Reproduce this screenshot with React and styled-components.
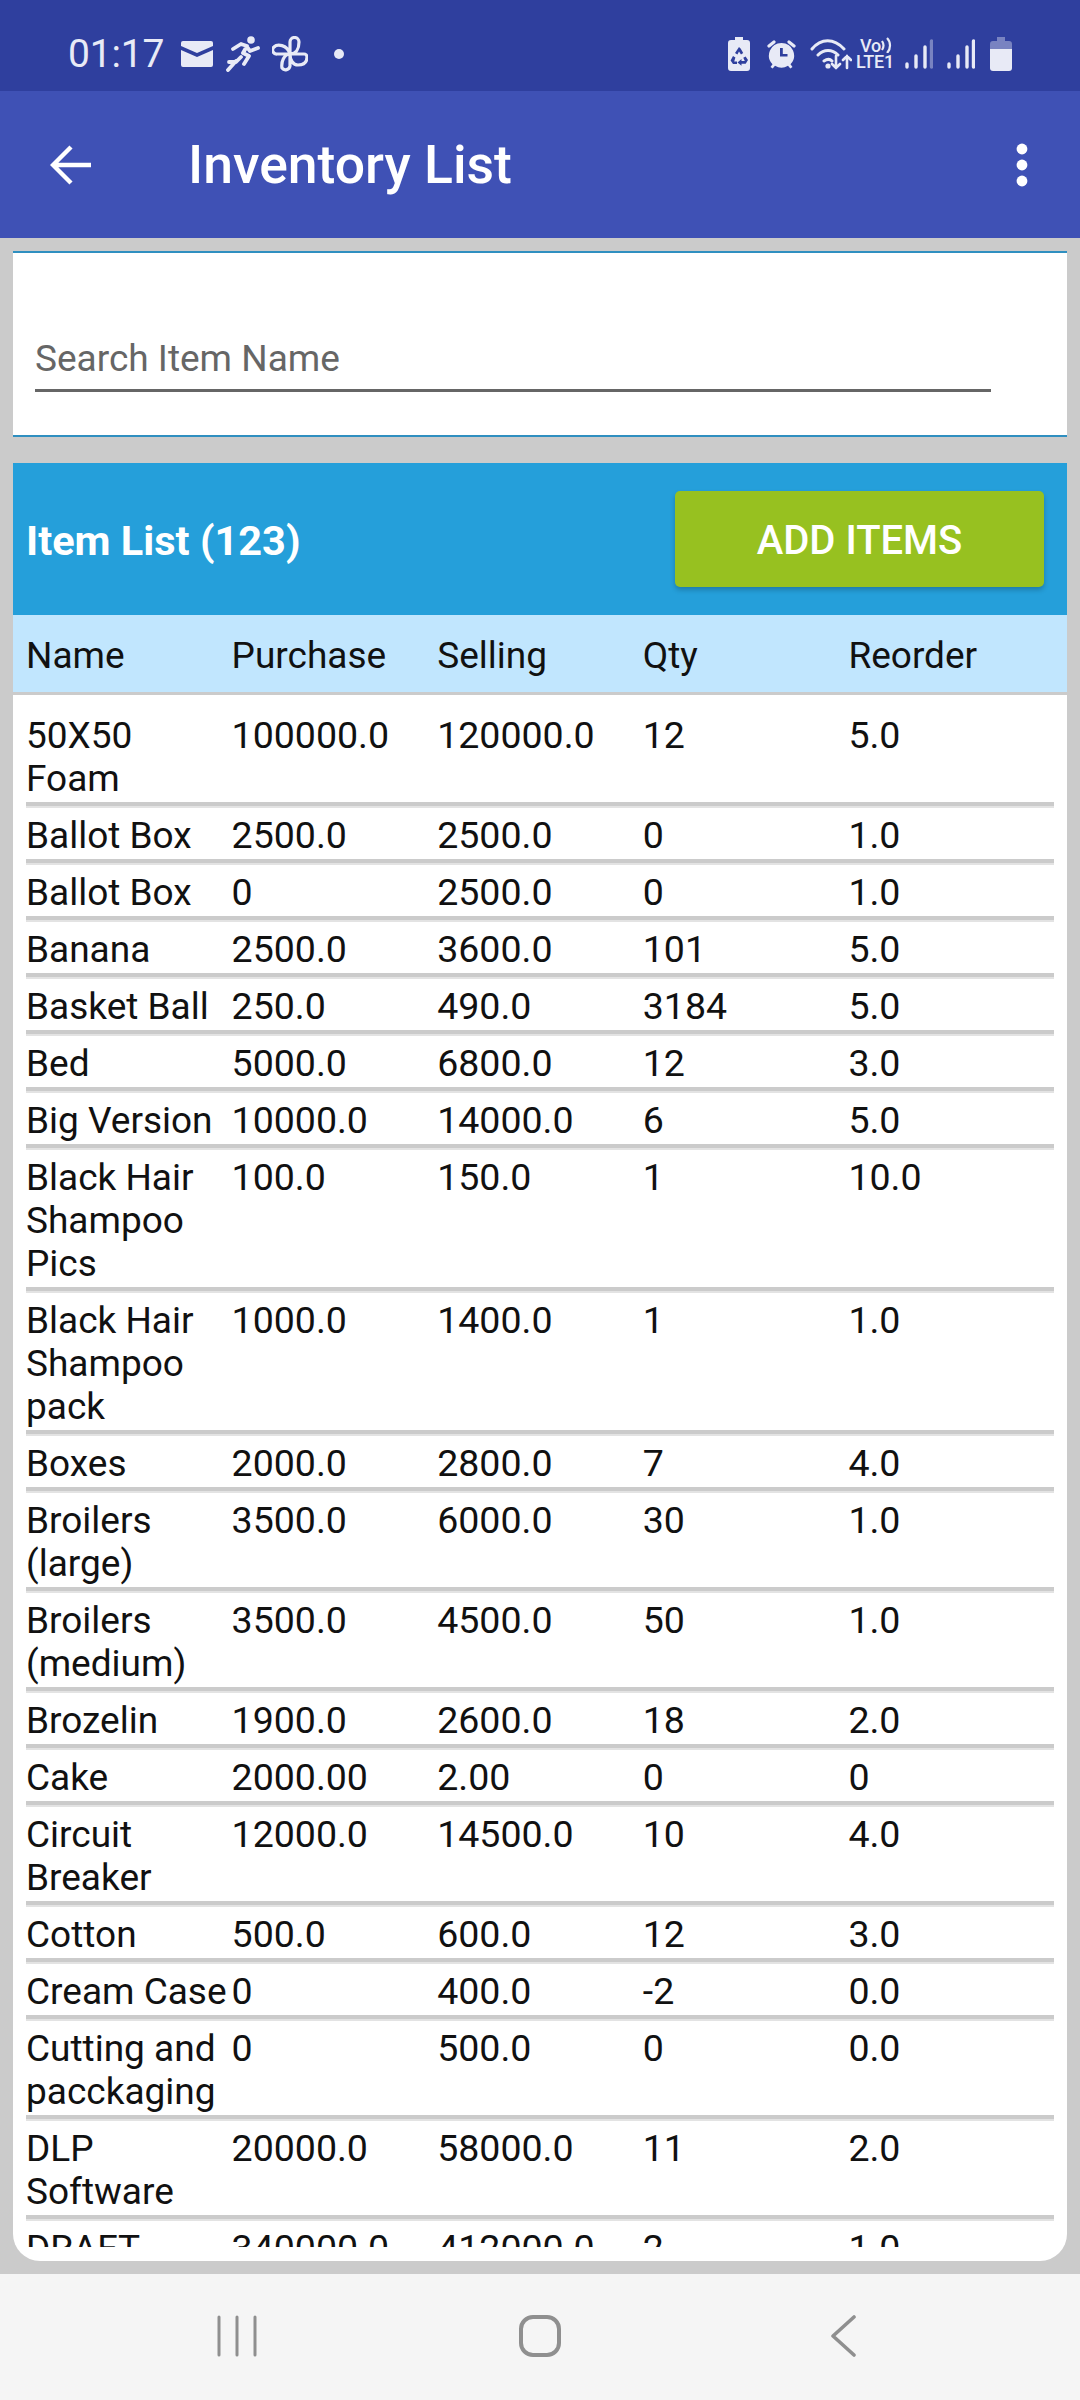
import React from 'react'
import styled, { createGlobalStyle } from 'styled-components'

const Global = createGlobalStyle`
  html, body { margin: 0; padding: 0; background: #cbcbcb; }
  * { box-sizing: border-box; }
  body { font-family: Roboto, "Noto Sans", sans-serif; }
`

const Page = styled.div`
  width: 1080px;
  height: 2400px;
  display: flex;
  flex-direction: column;
  overflow: hidden;
`

const StatusBar = styled.div`
  height: 91px;
  flex: none;
  background: #2f3f9e;
  color: #e8eaf6;
  display: flex;
  align-items: center;
  justify-content: space-between;
  padding: 17px 68px 0 68px;
`

const StatusGroup = styled.div`
  display: flex;
  align-items: center;
`

const Clock = styled.span`
  font-size: 39px;
  font-weight: 400;
  letter-spacing: -0.2px;
  margin-right: 17px;
`

const StatusIcon = styled.svg`
  display: block;
  flex: none;
  margin-left: ${(props) => props.$gap || 0}px;
`

const Network = styled.div`
  position: relative;
  width: 40px;
  height: 32px;
  margin-left: 4px;
  margin-right: 9px;
  font-size: 18px;
  font-weight: 500;
  line-height: 16px;
  letter-spacing: -0.2px;
  text-indent: 4px;
`

const VoWaves = styled.svg`
  position: absolute;
  left: 25px;
  top: -1px;
`

const Toolbar = styled.header`
  height: 147px;
  flex: none;
  background: #3f51b5;
  color: #fff;
  display: flex;
  align-items: center;
  padding: 0 52px 0 50px;
`

const BackArrow = styled.svg`
  flex: none;
`

const Title = styled.h1`
  margin: 0 0 0 97px;
  flex: 1;
  font-size: 53.5px;
  font-weight: 500;
  line-height: 62px;
`

const Content = styled.main`
  flex: 1;
  min-height: 0;
  background: #cbcbcb;
  padding: 13px;
  display: flex;
  flex-direction: column;
  gap: 26px;
`

const SearchCard = styled.section`
  height: 186px;
  flex: none;
  background: #fff;
  border-top: 2px solid #2f8fc0;
  border-bottom: 2px solid #2f8fc0;
  padding: 80px 76px 0 22px;
`

const SearchField = styled.div`
  height: 59px;
  border-bottom: 3px solid #666;
  color: #666;
  font-size: 37px;
  line-height: 43px;
  padding-top: 4px;
`

const ListCard = styled.section`
  flex: 1;
  min-height: 0;
  background: #fff;
  border-radius: 0 0 27px 27px;
  padding-bottom: 14px;
  display: flex;
  flex-direction: column;
`

const ListHeader = styled.div`
  height: 152px;
  flex: none;
  background: #259fda;
  display: flex;
  align-items: center;
  justify-content: space-between;
  padding: 0 23px 0 13px;
`

const ListTitle = styled.h2`
  margin: 0;
  color: #fff;
  font-size: 41.5px;
  font-weight: 700;
  padding-top: 2px;
`

const AddButton = styled.button`
  width: 369px;
  height: 96px;
  border: 0;
  border-radius: 5px;
  padding: 2px 0 0;
  background: #97c120;
  color: #fff;
  font-family: inherit;
  font-size: 40px;
  font-weight: 500;
  box-shadow: 0 3px 5px rgba(0, 0, 0, 0.22);
`

const Columns = styled.div`
  display: grid;
  grid-template-columns: repeat(5, minmax(0, 1fr));
  font-size: 37.5px;
  line-height: 43px;
  color: #111;
`

const HeadRow = styled(Columns)`
  height: 80px;
  flex: none;
  align-items: center;
  padding: 4px 13px 0;
  font-size: 37px;
  background: #c1e6fe;
  border-bottom: 3px solid #cbcbcb;
`

const Rows = styled.div`
  flex: 1;
  min-height: 0;
  overflow: hidden;
  padding: 13px 13px 0;
`

const Row = styled(Columns)`
  padding: 6px 0 2px;
  border-bottom: 4px solid #cbcbcb;
  margin-bottom: 2px;
  box-shadow: 0 2px 0 #e3e3e3;
`

const NameCell = styled.span`
  font-size: 37px;
`

const NavBar = styled.nav`
  height: 126px;
  flex: none;
  background: #f5f5f5;
  display: grid;
  grid-template-columns: repeat(3, 1fr);
  padding: 0 86px;
  align-items: center;
  justify-items: center;
`

const NavIcon = styled.svg`
  display: block;
  margin-top: -2px;
`

const items = [
  ['50X50 Foam', '100000.0', '120000.0', '12', '5.0'],
  ['Ballot Box', '2500.0', '2500.0', '0', '1.0'],
  ['Ballot Box', '0', '2500.0', '0', '1.0'],
  ['Banana', '2500.0', '3600.0', '101', '5.0'],
  ['Basket Ball', '250.0', '490.0', '3184', '5.0'],
  ['Bed', '5000.0', '6800.0', '12', '3.0'],
  ['Big Version', '10000.0', '14000.0', '6', '5.0'],
  ['Black Hair Shampoo Pics', '100.0', '150.0', '1', '10.0'],
  ['Black Hair Shampoo pack', '1000.0', '1400.0', '1', '1.0'],
  ['Boxes', '2000.0', '2800.0', '7', '4.0'],
  ['Broilers (large)', '3500.0', '6000.0', '30', '1.0'],
  ['Broilers (medium)', '3500.0', '4500.0', '50', '1.0'],
  ['Brozelin', '1900.0', '2600.0', '18', '2.0'],
  ['Cake', '2000.00', '2.00', '0', '0'],
  ['Circuit Breaker', '12000.0', '14500.0', '10', '4.0'],
  ['Cotton', '500.0', '600.0', '12', '3.0'],
  ['Cream Case', '0', '400.0', '-2', '0.0'],
  ['Cutting and pacckaging', '0', '500.0', '0', '0.0'],
  ['DLP Software', '20000.0', '58000.0', '11', '2.0'],
  ['DRAFT', '340000.0', '412000.0', '2', '1.0'],
]

function Signal({ gap, faded }) {
  return (
    <StatusIcon $gap={gap} width="28" height="30" viewBox="0 0 28 30">
      <g fill="none" stroke="currentColor" strokeWidth="3.4" strokeLinecap="round">
        <path d="M2 25v3M11 17v11M20 8v20" />
        <path d="M26.500 2v26" opacity={faded ? 0.4 : 1} />
      </g>
    </StatusIcon>
  )
}

function App() {
  return (
    <Page>
      <Global />
      <StatusBar>
        <StatusGroup>
          <Clock>01:17</Clock>
          <StatusIcon width="32" height="26" viewBox="0 0 32 26">
            <path fill="currentColor" d="M2 0h28a2 2 0 0 1 2 2v3L16 12 0 5V2a2 2 0 0 1 2-2z" />
            <path fill="currentColor" d="M0 9l16 7 16-7v15a2 2 0 0 1-2 2H2a2 2 0 0 1-2-2z" />
          </StatusIcon>
          <StatusIcon $gap={13} width="34" height="36" viewBox="0 0 34 36">
            <circle cx="25" cy="4" r="3.800" fill="currentColor" />
            <path fill="none" stroke="currentColor" strokeWidth="3.800" strokeLinecap="round" strokeLinejoin="round"
              d="M7 13l8-5 6 2-4 7 6 3-5 8M21 11l3 4 8-3M15 21l-5 5-7 0M2 34l8-9" />
          </StatusIcon>
          <StatusIcon $gap={12} width="36" height="36" viewBox="0 0 36 36">
            <path fill="none" stroke="currentColor" strokeWidth="3.200" strokeLinejoin="round"
              d="M18 18V6a4.500 4.500 0 0 1 9 0c0 7-3 12-9 12zM18 18h14a3 3 0 0 1 3 3c0 6-4 8-9 8-5 0-8-5-8-11zM18 18v12a4.500 4.500 0 0 1-8 2c-1-6 2-14 8-14zM18 18H5a4 4 0 0 1-3-7c3-3 13-3 16 7z" />
          </StatusIcon>
          <StatusIcon $gap={25} width="12" height="12" viewBox="0 0 12 12">
            <circle cx="6" cy="6" r="5" fill="currentColor" />
          </StatusIcon>
        </StatusGroup>
        <StatusGroup>
          <StatusIcon width="22" height="34" viewBox="0 0 22 34">
            <path fill="currentColor" fillRule="evenodd"
              d="M7 0h8v3h4a3 3 0 0 1 3 3v25a3 3 0 0 1-3 3H3a3 3 0 0 1-3-3V6a3 3 0 0 1 3-3h4zM11 10l-4 6 2.400 1.400 1.600-3 2 3 2.200-1.300-2.400-4.300zM5 19l-2.400 4.500L5 27h4v-2.600H6.200l1.200-3.800zM17.600 19.500l-2.300 1.300 1.500 3.200H13.500v-2l-4 3.400 4 3.400v-2h4.200l2.300-3.700z" />
          </StatusIcon>
          <StatusIcon $gap={17} width="29" height="30" viewBox="0 0 29 30">
            <path fill="currentColor" fillRule="evenodd"
              d="M14.500 4a12.500 12.500 0 0 1 9 21.200l2 2.800-2.200 1.500-2.300-2.800a12.500 12.500 0 0 1-13 0L5.700 29.500 3.500 28l2-2.800A12.500 12.500 0 0 1 14.500 4zM13 9v8.500h7.500v-2.600H15.800V9z" />
            <path fill="none" stroke="currentColor" strokeWidth="3.200" strokeLinecap="round" d="M2 7l5-4M27 7l-5-4" />
          </StatusIcon>
          <StatusIcon $gap={14} width="42" height="32" viewBox="0 0 42 32">
            <g fill="none" stroke="currentColor" strokeWidth="3" strokeLinecap="round">
              <path d="M2 11C11 0 24 0 34 11M8 17c6-6 14-6 20 0M14 23c3-2 6-2 8 0" />
              <path d="M26 18v12M22 26l4 4 4-4M37 30V18M33 22l4-4 4 4" strokeWidth="2.600" />
            </g>
            <circle cx="18" cy="28" r="2.600" fill="currentColor" />
          </StatusIcon>
          <Network>
            Vo
            <br />
            LTE1
            <VoWaves width="12" height="16" viewBox="0 0 12 16">
              <path fill="none" stroke="currentColor" strokeWidth="2.200" d="M1 4c2 3 2 6 0 9M6 1c4 4 4 11 0 15" />
            </VoWaves>
          </Network>
          <Signal faded />
          <Signal gap={14} />
          <StatusIcon $gap={15} width="22" height="34" viewBox="0 0 22 34">
            <path fill="currentColor" opacity="0.4" d="M7 0h8v4h4a3 3 0 0 1 3 3v5H0V7a3 3 0 0 1 3-3h4z" />
            <path fill="currentColor" d="M0 12h22v19a3 3 0 0 1-3 3H3a3 3 0 0 1-3-3z" />
          </StatusIcon>
        </StatusGroup>
      </StatusBar>

      <Toolbar>
        <BackArrow width="41" height="40" viewBox="0 0 41 40">
          <path fill="none" stroke="#fff" strokeWidth="4.400" d="M41 20H3M21 2L3 20l18 18" />
        </BackArrow>
        <Title>Inventory List</Title>
        <svg width="12" height="44" viewBox="0 0 12 44">
          <g fill="#fff">
            <circle cx="6" cy="6" r="5.400" />
            <circle cx="6" cy="22" r="5.400" />
            <circle cx="6" cy="38" r="5.400" />
          </g>
        </svg>
      </Toolbar>

      <Content>
        <SearchCard>
          <SearchField>Search Item Name</SearchField>
        </SearchCard>
        <ListCard>
          <ListHeader>
            <ListTitle>Item List (123)</ListTitle>
            <AddButton>ADD ITEMS</AddButton>
          </ListHeader>
          <HeadRow>
            <span>Name</span>
            <span>Purchase</span>
            <span>Selling</span>
            <span>Qty</span>
            <span>Reorder</span>
          </HeadRow>
          <Rows>
            {items.map(([name, ...values], i) => (
              <Row key={i}>
                <NameCell>{name}</NameCell>
                {values.map((value, j) => (
                  <span key={j}>{value}</span>
                ))}
              </Row>
            ))}
          </Rows>
        </ListCard>
      </Content>

      <NavBar>
        <NavIcon width="40" height="42" viewBox="0 0 40 42">
          <path fill="none" stroke="#8f8f8f" strokeWidth="3" strokeLinecap="round" d="M2 2v38M20 2v38M38 2v38" />
        </NavIcon>
        <NavIcon width="44" height="44" viewBox="0 0 44 44">
          <rect x="3" y="3" width="38" height="38" rx="12" fill="none" stroke="#8f8f8f" strokeWidth="4" />
        </NavIcon>
        <NavIcon width="26" height="44" viewBox="0 0 26 44">
          <path fill="none" stroke="#8f8f8f" strokeWidth="3.600" strokeLinecap="round" strokeLinejoin="round" d="M24 3L3 22l21 19" />
        </NavIcon>
      </NavBar>
    </Page>
  )
}

export default App
